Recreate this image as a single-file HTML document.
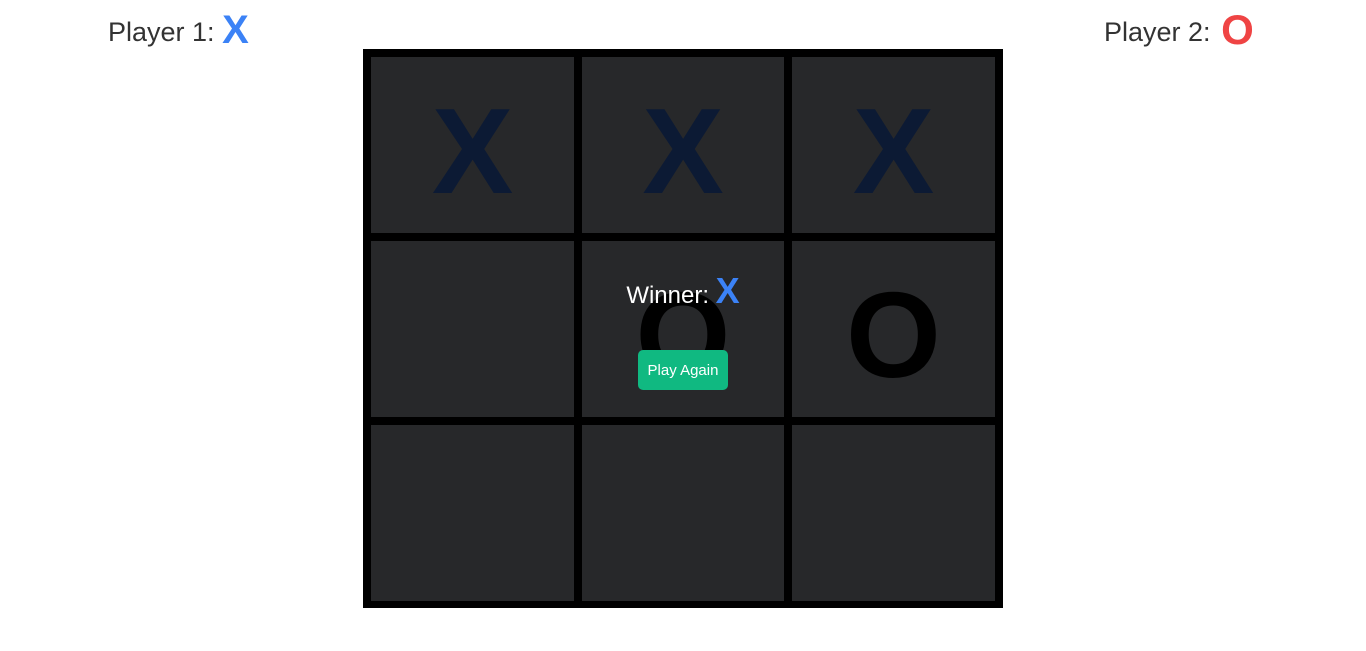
<!DOCTYPE html>
<html><head><meta charset="utf-8"><style>
body{margin:0;width:1366px;height:651px;background:#fff;position:relative;overflow:hidden;font-family:"Liberation Sans",sans-serif}
.lbl{position:absolute;top:10px;font-size:27px;font-weight:300;color:#333;white-space:nowrap;line-height:44px}
.lbl b{font-size:40px;font-weight:700;vertical-align:top;line-height:36px;position:relative;top:2px}
.board{position:absolute;left:363px;top:49px;width:640px;height:559px;background:#000}
.c{position:absolute;background:#27282a;display:flex;align-items:center;justify-content:center;font-weight:700;font-size:122px;line-height:1;box-sizing:border-box;padding-top:12px}
.x{color:#0c1a34}.o{color:#000}
.win{position:absolute;left:582px;top:270px;width:202px;text-align:center;color:#fff;font-size:24px;font-weight:300}
.win b{color:#3b82f6;font-size:36px;font-weight:700}
.btn{position:absolute;left:638px;top:350px;width:90px;height:40px;background:#10b981;border-radius:5px;color:#fff;font-size:15px;display:flex;align-items:center;justify-content:center}
</style></head><body>
<div class="lbl" style="left:108px">Player 1: <b style="color:#3b82f6">X</b></div>
<div class="lbl" style="left:1104px">Player 2: <b style="color:#ef4444;font-size:42px;top:2px;margin-left:3px">O</b></div>
<div class="board">
<div class="c x" style="left:8px;top:8px;width:203px;height:176px">X</div>
<div class="c x" style="left:219px;top:8px;width:202px;height:176px">X</div>
<div class="c x" style="left:429px;top:8px;width:203px;height:176px">X</div>
<div class="c" style="left:8px;top:192px;width:203px;height:176px"></div>
<div class="c o" style="left:219px;top:192px;width:202px;height:176px">O</div>
<div class="c o" style="left:429px;top:192px;width:203px;height:176px">O</div>
<div class="c" style="left:8px;top:376px;width:203px;height:176px"></div>
<div class="c" style="left:219px;top:376px;width:202px;height:176px"></div>
<div class="c" style="left:429px;top:376px;width:203px;height:176px"></div>
</div>
<div class="win">Winner: <b>X</b></div>
<div class="btn">Play Again</div>
</body></html>
